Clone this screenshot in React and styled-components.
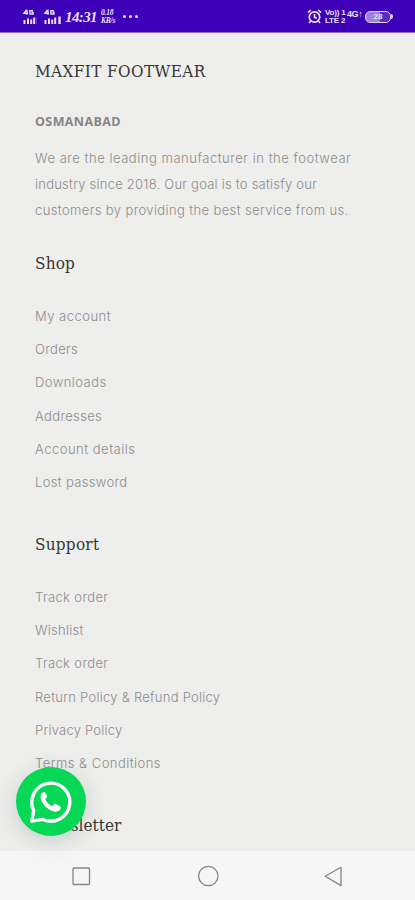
import React from "react";
import styled, { createGlobalStyle } from "styled-components";

const GlobalStyle = createGlobalStyle`
  * { box-sizing: border-box; }
  body { margin: 0; background: #eeeeec; }
`;

const Screen = styled.div`
  position: relative;
  display: flex;
  flex-direction: column;
  height: 900px;
  width: 415px;
  overflow: hidden;
  background: #eeeeec;
  font-family: Inter, "Open Sans", sans-serif;
`;

const StatusBar = styled.header`
  flex: none;
  display: flex;
  align-items: center;
  justify-content: space-between;
  height: 33px;
  padding: 0 21px 0 22px;
  background: #3d00b8;
  border-bottom: 1px solid #8b6bd2;
  color: #e9e0fb;
`;

const StatusGroup = styled.div`
  display: flex;
  align-items: center;
  height: 32px;
  padding-top: 1px;
`;

const Signal = styled.svg`
  display: block;
  margin-right: ${(p) => p.$gap}px;
`;

const Clock = styled.span`
  width: 33px;
  font: italic bold 15px/20px "Liberation Serif", serif;
  letter-spacing: -0.6px;
  margin-top: 1px;
`;

const TinyStack = styled.span`
  display: flex;
  flex-direction: column;
  width: ${(p) => p.$width}px;
  margin-left: ${(p) => p.$left}px;
  font: ${(p) => (p.$italic ? "italic" : "normal")} bold ${(p) => p.$size}px / ${(p) => p.$leading}px
    ${(p) => (p.$italic ? '"Liberation Serif", serif' : '"Liberation Sans", sans-serif')};
  letter-spacing: -0.2px;
  white-space: nowrap;
`;

const Dots = styled.span`
  display: flex;
  gap: 3px;
  margin-left: 5px;
  i {
    width: 3px;
    height: 3px;
    border-radius: 50%;
    background: #e9e0fb;
  }
`;

const Network = styled.span`
  width: 17px;
  margin: -6px 0 0 0;
  font: bold 9px/10px "Liberation Sans", sans-serif;
  letter-spacing: -0.4px;
`;

const Battery = styled.span`
  position: relative;
  display: flex;
  align-items: center;
  justify-content: center;
  width: 26px;
  height: 12px;
  margin-left: 1px;
  margin-right: 3px;
  border: 1.5px solid #ddd0f7;
  border-radius: 5px;
  background: linear-gradient(90deg, #9c82dc 60%, #5a2bc6 60%);
  font: bold 8px/9px "Liberation Sans", sans-serif;
  &::after {
    content: "";
    position: absolute;
    right: -3px;
    top: 2px;
    width: 2px;
    height: 5px;
    border-radius: 0 2px 2px 0;
    background: #ddd0f7;
  }
`;

const Footer = styled.main`
  flex: 1;
  min-height: 0;
  overflow: hidden;
  padding: 25.4px 35px 0;
`;

const Heading = styled.h2`
  margin: 0 0 ${(p) => p.$after}px;
  color: #363636;
  font: 400 17px/26px "DejaVu Serif Condensed", "DejaVu Serif", serif;
  font-stretch: condensed;
  letter-spacing: ${(p) => p.$track || 0}px;
  white-space: nowrap;
`;

const City = styled.strong`
  display: block;
  margin-bottom: 10px;
  color: #858585;
  font: 700 12.5px/26px "Open Sans", sans-serif;
  letter-spacing: 0.4px;
`;

const About = styled.p`
  margin: 0 0 27.4px;
`;

const Line = styled.span`
  display: block;
  color: #8c8c8c;
  font-size: 13px;
  font-weight: 300;
  line-height: 26px;
  letter-spacing: ${(p) => p.$track}px;
  white-space: nowrap;
`;

const LinkList = styled.ul`
  list-style: none;
  margin: 0 0 ${(p) => p.$after || 0}px;
  padding: 0;
`;

const LinkItem = styled.li`
  height: 33.25px;
  color: #8c8c8c;
  font-size: 13px;
  font-weight: 300;
  line-height: 33.25px;
  letter-spacing: ${(p) => p.$track}px;
  white-space: nowrap;
`;

const ChatButton = styled.button`
  position: absolute;
  left: 16px;
  top: 767px;
  display: grid;
  place-items: center;
  width: 70px;
  height: 69px;
  padding: 0;
  border: 0;
  border-radius: 50%;
  background: #06d755;
  box-shadow: 0 5px 22px rgba(40, 90, 80, 0.2);
`;

const NavBar = styled.nav`
  flex: none;
  display: flex;
  align-items: center;
  justify-content: space-between;
  height: 49px;
  padding: 1px 69px 0 69px;
  background: #f6f6f6;
  svg { display: block; }
`;

const about = [
  ["We are the leading manufacturer in the footwear", 0.53],
  ["industry since 2018. Our goal is to satisfy our", 0.23],
  ["customers by providing the best service from us.", 0.38],
];
const shop = [
  ["My account", 0.48],
  ["Orders", 0.35],
  ["Downloads", 0.44],
  ["Addresses", 0.35],
  ["Account details", 0.5],
  ["Lost password", 0.33],
];
const support = [
  ["Track order", 0.37],
  ["Wishlist", 0.25],
  ["Track order", 0.37],
  ["Return Policy & Refund Policy", 0.26],
  ["Privacy Policy", 0.23],
  ["Terms & Conditions", 0.46],
];

function SignalIcon({ full, gap }) {
  return (
    <Signal $gap={gap} width={full ? 18 : 15} height="16" viewBox={`0 0 ${full ? 18 : 15} 16`} fill="none" stroke="#e9e0fb">
      <path d="M4.500 1 2 4.200h4M5 .8v5M11 1.700H7.900v3.400H11V3.500H9.500" strokeWidth="1.4" />
      <path d="M2.500 11v4M6 9.500V15M9.200 10.500V15M12.200 8.500V15" strokeWidth="2" />
      {full ? <path d="M16.500 7.500V15" strokeWidth="2.400" /> : <path d="M14.500 8v7" stroke="#5a2bc6" strokeWidth="1" />}
    </Signal>
  );
}

function Links({ items, after }) {
  return (
    <LinkList $after={after}>
      {items.map(([label, track], i) => (
        <LinkItem key={i} $track={track}>{label}</LinkItem>
      ))}
    </LinkList>
  );
}

export default function App() {
  return (
    <Screen>
      <GlobalStyle />
      <StatusBar>
        <StatusGroup>
          <SignalIcon gap={6} />
          <SignalIcon full gap={4} />
          <Clock>14:31</Clock>
          <TinyStack $italic $size={7.5} $leading={7.5} $width={17} $left={3}>
            <span>0.18</span>
            <span>KB/s</span>
          </TinyStack>
          <Dots><i /><i /><i /></Dots>
        </StatusGroup>
        <StatusGroup>
          <svg width="15" height="15" viewBox="0 0 15 15" fill="none" stroke="#e9e0fb" strokeWidth="1.7">
            <circle cx="7.5" cy="8" r="5.2" />
            <path d="M7.5 5v3.300l2.300.8M1 3.600 3.800 1M14 3.600 11.200 1M3.500 12.200 2 14M11.500 12.200 13 14" />
          </svg>
          <TinyStack $size={8} $leading={8} $width={22} $left={3}>
            <span>Vo)) 1</span>
            <span>LTE 2</span>
          </TinyStack>
          <Network>4G↑</Network>
          <Battery>28</Battery>
        </StatusGroup>
      </StatusBar>
      <Footer>
        <Heading $after={24.6} $track={0.4}>MAXFIT FOOTWEAR</Heading>
        <City>OSMANABAD</City>
        <About>
          {about.map(([text, track]) => (
            <Line key={text} $track={track}>{text}</Line>
          ))}
        </About>
        <Heading $after={23.4} $track={0.15}>Shop</Heading>
        <Links items={shop} after={32.2} />
        <Heading $after={23.4} $track={0.25}>Support</Heading>
        <Links items={support} after={32} />
        <Heading $after={0} $track={0.05}>Newsletter</Heading>
      </Footer>
      <ChatButton aria-label="WhatsApp">
        <svg width="44" height="44" viewBox="0 0 44 44" fill="none">
          <path d="M2.800 41.200 4.700 30.500A19 19 0 1 1 13.500 39.300Z" stroke="#fff" strokeWidth="3.400" strokeLinejoin="round" />
          <path d="M14.800 12.200c-2.600.7-3.700 3.100-3 6.200 1.500 6.200 7 11.500 13.200 13 3.300.8 6-.4 6.600-3.100.3-1.200 0-1.900-1-2.400l-3.700-1.800c-1-.5-1.600-.3-2.200.5l-1.300 1.600c-3.400-1.300-5.900-3.800-7.200-6.900l1.400-1.600c.5-.6.6-1.200.3-1.900l-1.500-3.100c-.3-.6-.8-.8-1.600-.5Z" fill="#fff" />
        </svg>
      </ChatButton>
      <NavBar>
        <svg width="24" height="24" viewBox="0 0 24 24" fill="none" stroke="#858585" strokeWidth="1.300">
          <rect x="4" y="4" width="16.500" height="16.500" rx="1" />
        </svg>
        <svg width="24" height="24" viewBox="0 0 24 24" fill="none" stroke="#858585" strokeWidth="1.300">
          <circle cx="12.300" cy="12" r="9.700" />
        </svg>
        <svg width="24" height="24" viewBox="0 0 24 24" fill="none" stroke="#858585" strokeWidth="1.300" strokeLinejoin="round">
          <path d="M3.200 12.300 19 3.200v18.400Z" />
        </svg>
      </NavBar>
    </Screen>
  );
}
